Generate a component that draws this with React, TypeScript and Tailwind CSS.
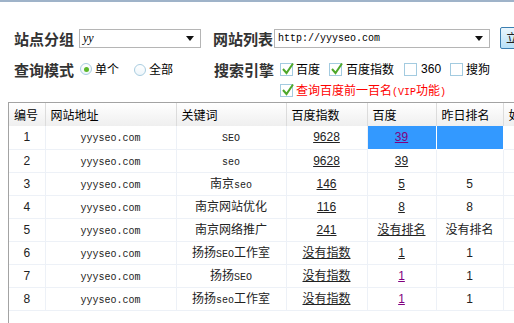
import React from "react";

type Row = {
  id: number;
  kw: string;
  index: string;
  baidu: string;
  baiduLink: boolean;
  visited?: boolean;
  yesterday: string;
  selected?: boolean;
};

const rows: Row[] = [
  { id: 1, kw: "SEO", index: "9628", baidu: "39", baiduLink: true, visited: true, yesterday: "", selected: true },
  { id: 2, kw: "seo", index: "9628", baidu: "39", baiduLink: true, yesterday: "" },
  { id: 3, kw: "南京seo", index: "146", baidu: "5", baiduLink: true, yesterday: "5" },
  { id: 4, kw: "南京网站优化", index: "116", baidu: "8", baiduLink: true, yesterday: "8" },
  { id: 5, kw: "南京网络推广", index: "241", baidu: "没有排名", baiduLink: true, yesterday: "没有排名" },
  { id: 6, kw: "扬扬SEO工作室", index: "没有指数", baidu: "1", baiduLink: true, yesterday: "1" },
  { id: 7, kw: "扬扬SEO", index: "没有指数", baidu: "1", baiduLink: true, visited: true, yesterday: "1" },
  { id: 8, kw: "扬扬seo工作室", index: "没有指数", baidu: "1", baiduLink: true, visited: true, yesterday: "1" },
];

// ascii runs get the narrow mono face, like the bitmap font in the shot
function Mixed({ text }: { text: string }) {
  const parts = text.match(/[\x00-\x7f]+|[^\x00-\x7f]+/g) || [];
  return (
    <>
      {parts.map((p, i) =>
        /^[\x00-\x7f]+$/.test(p) ? (
          <span key={i} className="font-['Liberation_Mono',monospace] text-[10px]">
            {p}
          </span>
        ) : (
          <span key={i}>{p}</span>
        )
      )}
    </>
  );
}

function Check({ on }: { on: boolean }) {
  return (
    <span className="relative inline-block w-[13px] h-[13px] border border-[#a3cbe0] bg-white shrink-0">
      {on && (
        <svg width="14" height="14" viewBox="0 0 14 14" className="absolute -top-[2px] left-0">
          <path d="M2 7 L5.5 11 L12 1.5" fill="none" stroke="#4ea82a" strokeWidth="2" />
        </svg>
      )}
    </span>
  );
}

function Radio({ on }: { on: boolean }) {
  return (
    <span className="inline-flex items-center justify-center w-[12px] h-[12px] rounded-full border border-[#a9cde0] bg-gradient-to-b from-white to-[#eef6fb] shrink-0">
      {on && <span className="w-[5px] h-[5px] rounded-full bg-[#5cb82a]" />}
    </span>
  );
}

function Select({ value, width, mono }: { value: string; width: string; mono?: boolean }) {
  return (
    <div className={`${width} h-[19px] border border-[#b5b5b5] bg-white flex items-center pl-[3px] pr-[6px]`}>
      <span
        className={
          mono
            ? "flex-1 font-['Liberation_Mono',monospace] text-[10px] text-black"
            : "flex-1 font-['Liberation_Serif',serif] text-[12px] italic text-black"
        }
      >
        {value}
      </span>
      <svg width="8" height="5" viewBox="0 0 8 5">
        <path d="M0 0 H8 L4 5 Z" fill="#111" />
      </svg>
    </div>
  );
}

export default function App() {
  const cell = "border-r border-b border-[#edf1f7] text-center align-middle h-[23px] p-0";
  return (
    <div className="w-[514px] h-[323px] overflow-hidden bg-white relative font-['Noto_Sans_CJK_SC',sans-serif] text-[#222]">
      <div className="h-[2px] bg-[#9fb3c9]" />

      <div className="pl-[14px] pt-[25px] w-[700px]">
        <div className="flex items-center h-[22px]">
          <span className="w-[65px] text-[15px] font-bold text-[#333] leading-none">站点分组</span>
          <Select value="yy" width="w-[122px]" />
          <span className="ml-[12px] w-[61px] text-[15px] font-bold text-[#333] leading-none">网站列表</span>
          <Select value="http://yyyseo.com" width="w-[216px]" mono />
          <button className="ml-[10px] h-[22px] px-[5px] border border-[#3c7fb1] rounded-[2px] bg-gradient-to-b from-[#eaf6fd] to-[#b8e1f8] text-[12px] text-[#222]">
            立即查询
          </button>
        </div>

        <div className="flex items-center h-[22px] mt-[9px]">
          <span className="w-[66px] text-[15px] font-bold text-[#333] leading-none">查询模式</span>
          <Radio on />
          <span className="ml-[3px] text-[12px] text-black">单个</span>
          <span className="ml-[15px]">
            <Radio on={false} />
          </span>
          <span className="ml-[3px] text-[12px] text-black">全部</span>
          <span className="ml-[41px] w-[66px] text-[15px] font-bold text-[#333] leading-none">搜索引擎</span>
          <Check on />
          <span className="ml-[3px] text-[12px] text-black">百度</span>
          <span className="ml-[9px]">
            <Check on />
          </span>
          <span className="ml-[4px] text-[12px] text-black">百度指数</span>
          <span className="ml-[10px]">
            <Check on={false} />
          </span>
          <span className="ml-[4px] text-[12px] text-black font-['Liberation_Sans',sans-serif]">360</span>
          <span className="ml-[9px]">
            <Check on={false} />
          </span>
          <span className="ml-[3px] text-[12px] text-black">搜狗</span>
        </div>

        <div className="flex items-center h-[20px] pl-[266px]">
          <Check on />
          <span className="ml-[3px] text-[12px] text-[#ff0000]">
            查询百度前一百名<span className="font-['Liberation_Mono',monospace] text-[10px]">(VIP</span>功能<span className="font-['Liberation_Mono',monospace] text-[10px]">)</span>
          </span>
        </div>
      </div>

      <div className="ml-[8px] mt-[2px] h-[240px] border-l border-t border-[#a3a3a3] w-[700px]">
        <table className="border-collapse table-fixed text-[12px]">
          <colgroup>
            <col className="w-[36px]" />
            <col className="w-[131px]" />
            <col className="w-[110px]" />
            <col className="w-[81px]" />
            <col className="w-[69px]" />
            <col className="w-[67px]" />
            <col className="w-[80px]" />
          </colgroup>
          <thead>
            <tr className="h-[23px] bg-gradient-to-b from-white to-[#efefef]">
              {["编号", "网站地址", "关键词", "百度指数", "百度", "昨日排名", "如何"].map((h) => (
                <th
                  key={h}
                  className="border-r border-[#dcdcdc] text-left font-normal pl-[5px] text-black text-[12px] p-0"
                >
                  {h}
                </th>
              ))}
            </tr>
          </thead>
          <tbody className="font-['Liberation_Sans','Noto_Sans_CJK_SC',sans-serif]">
            {rows.map((r) => (
              <tr key={r.id}>
                <td className={cell}>{r.id}</td>
                <td className={cell}>
                  <span className="font-['Liberation_Mono',monospace] text-[10px]">yyyseo.com</span>
                </td>
                <td className={cell}>
                  <Mixed text={r.kw} />
                </td>
                <td className={cell}>
                  <span className="underline text-[#222]">{r.index}</span>
                </td>
                <td className={r.selected ? "border-r border-b border-white bg-[#3399ff] text-center h-[23px] p-0" : cell}>
                  <span className={r.visited ? "underline text-[#800080]" : "underline text-[#222]"}>{r.baidu}</span>
                </td>
                <td className={r.selected ? "border-r border-b border-white bg-[#3399ff] text-center h-[23px] p-0" : cell}>
                  {r.yesterday}
                </td>
                <td className={cell}></td>
              </tr>
            ))}
          </tbody>
        </table>
      </div>
    </div>
  );
}
